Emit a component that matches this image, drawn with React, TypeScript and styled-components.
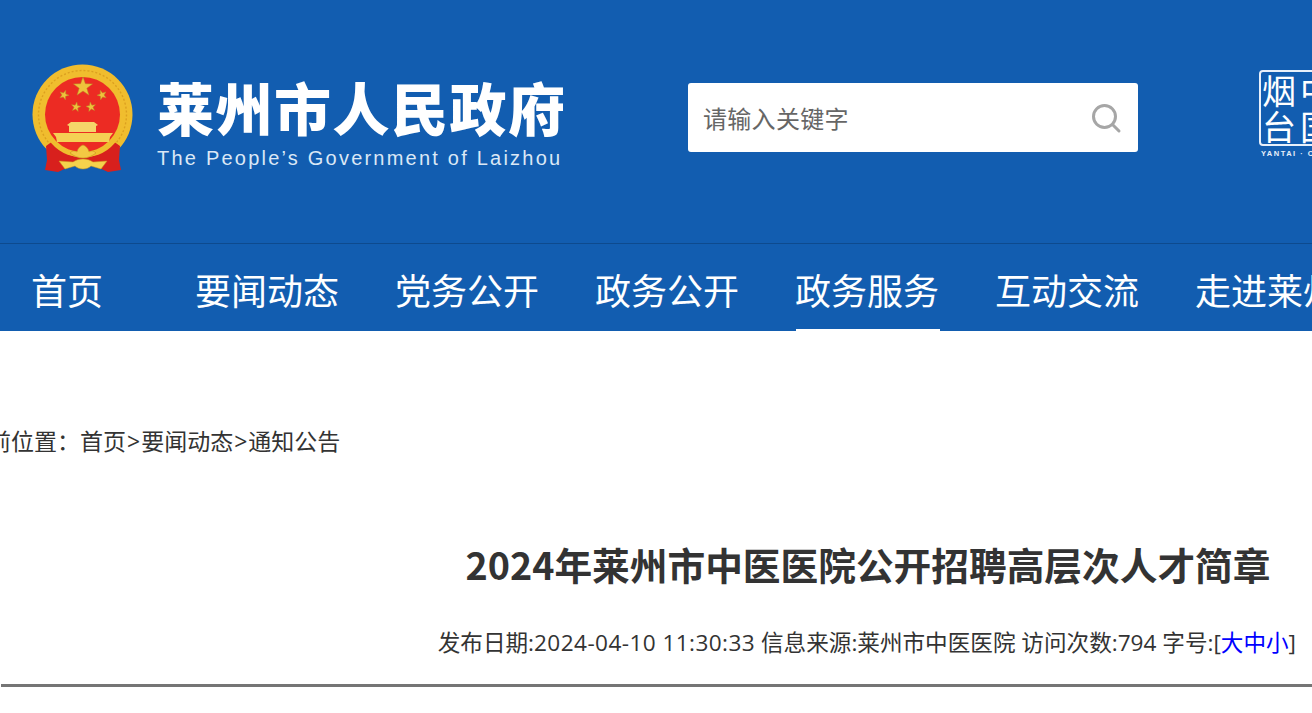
import React from "react";
import styled, { createGlobalStyle } from "styled-components";

const Global = createGlobalStyle`
  html, body { margin: 0; padding: 0; background: #fff; overflow: hidden; }
  body { font-family: "Noto Sans CJK SC", "Liberation Sans", sans-serif; }
  input::placeholder { color: #666; opacity: 1; }
`;

const Page = styled.div`
  width: 1312px;
  height: 713px;
  overflow: hidden;
`;

const Masthead = styled.header`
  height: 179px;
  background: #125db0;
  display: flex;
  align-items: flex-start;
  padding: 64px 0 0 32px;
  border-bottom: 1px solid #0d4a8e;
`;

const Emblem = styled.svg`
  width: 102px;
  height: 108px;
  flex: none;
`;

const Brand = styled.div`
  margin-left: 23px;
  width: 431px;
  flex: none;
`;

const BrandName = styled.div`
  font-size: 57px;
  font-weight: 900;
  line-height: 60px;
  margin-top: 12px;
  letter-spacing: 1.5px;
  color: #fff;
  white-space: nowrap;
`;

const BrandEnglish = styled.div`
  font-family: "Liberation Sans", Arial, sans-serif;
  font-size: 20px;
  line-height: 24px;
  margin-top: 10px;
  letter-spacing: 2.22px;
  color: #dbe8f6;
  white-space: nowrap;
`;

const Search = styled.form`
  width: 450px;
  height: 69px;
  margin: 19px 0 0 100px;
  background: #fff;
  border-radius: 3px;
  display: flex;
  align-items: center;
  flex: none;
`;

const SearchInput = styled.input`
  flex: 1;
  min-width: 0;
  border: 0;
  outline: 0;
  background: none;
  padding: 0 0 0 15px;
  font: 24px "Noto Sans CJK SC", sans-serif;
  letter-spacing: 0.3px;
`;

const SearchIcon = styled.svg`
  width: 32px;
  height: 32px;
  margin-right: 16px;
  flex: none;
`;

const Seal = styled.div`
  margin: 6px 0 0 121px;
  flex: none;
  width: 84px;
  color: #fff;
`;

const SealBox = styled.div`
  width: 76px;
  height: 72px;
  border: 2px solid #e8f0fa;
  border-radius: 4px;
  display: grid;
  grid-template-columns: 36px 40px;
  grid-template-rows: 36px 36px;
  font-family: "Noto Sans CJK SC", sans-serif;
  font-size: 34px;
  font-weight: 400;
  line-height: 36px;
  text-align: center;
`;

const SealCaption = styled.div`
  font: bold 7.5px "Liberation Sans", sans-serif;
  letter-spacing: 1.5px;
  margin-top: 3px;
  padding-left: 2px;
  white-space: nowrap;
  color: #e8f0fa;
`;

const Nav = styled.nav`
  height: 87px;
  background: #125db0;
  display: flex;
  padding-left: 32px;
  white-space: nowrap;
  overflow: hidden;
`;

const NavItem = styled.a<{ $active?: boolean; $first?: boolean }>`
  flex: none;
  height: 87px;
  box-sizing: border-box;
  font-size: 36px;
  line-height: 90px;
  text-indent: -1px;
  padding-right: 1px;
  color: #fff;
  margin-right: ${(p) => (p.$first ? "92px" : "56px")};
  border-bottom: 2px solid ${(p) => (p.$active ? "#fff" : "transparent")};
`;

const Crumbs = styled.div`
  margin: 93px 0 0 -35px;
  font-family: "Open Sans", "Noto Sans CJK SC", sans-serif;
  font-size: 23px;
  line-height: 34px;
  color: #333;
  white-space: nowrap;
`;

const CrumbSep = styled.span`
  padding: 0 1px;
`;

const Title = styled.h1`
  margin: 78px 0 0;
  width: 1736px;
  text-align: center;
  font-size: 37.7px;
  line-height: 56px;
  font-weight: 700;
  color: #333;
  white-space: nowrap;
`;

const Meta = styled.div`
  margin-top: 34px;
  padding-right: 16px;
  text-align: right;
  font-family: "Open Sans", "Noto Sans CJK SC", sans-serif;
  font-size: 22.6px;
  line-height: 34px;
  color: #333;
  white-space: nowrap;
`;

const MetaDate = styled.span`
  letter-spacing: 0.42px;
`;

const SizeLink = styled.a`
  color: #00f;
`;

const Rule = styled.hr`
  margin: 24px 0 0 1px;
  height: 3px;
  border: 0;
  background: #757575;
`;

function Star({ x, y, r, rot = 0 }: { x: number; y: number; r: number; rot?: number }) {
  const pts: string[] = [];
  for (let i = 0; i < 10; i++) {
    const a = (-90 + rot + i * 36) * (Math.PI / 180);
    const rad = i % 2 === 0 ? r : r * 0.4;
    pts.push(`${(x + rad * Math.cos(a)).toFixed(2)},${(y + rad * Math.sin(a)).toFixed(2)}`);
  }
  return <polygon points={pts.join(" ")} fill="#efc23c" stroke="#b98f24" strokeWidth="0.5" />;
}

export default function App() {
  return (
    <Page>
      <Global />
      <Masthead>
        <Emblem viewBox="32 64 102 108">
          <circle cx="82.5" cy="114.5" r="50" fill="#f0bd2e" />
          <circle cx="82.5" cy="114.5" r="44" fill="none" stroke="#dca020" strokeWidth="1.4" strokeDasharray="2 2" />
          <circle cx="82.5" cy="114.5" r="37.5" fill="#ec2b23" />
          <Star x={83} y={87} r={10} />
          <Star x={64} y={95} r={5} rot={20} />
          <Star x={102} y={95} r={5} rot={-20} />
          <Star x={76} y={107} r={5} rot={10} />
          <Star x={91} y={107} r={5} rot={-10} />
          <path d="M71 122h23l4 3-2 1v6H69v-6l-2-1z" fill="#f5d569" />
          <path d="M53 133h60l-3 4-1 5H57l-1-5z" fill="#f5d054" />
          <path d="M46 146l7-5q10 15 30 17q20-2 30-17l7 5-1 14 2 10-13 2-13-6H71l-13 6-13-2 2-10z" fill="#d8201d" />
          <path d="M50 138q12 17 33 17q21 0 33-17" fill="none" stroke="#f0bd2e" strokeWidth="4.5" />
          <path d="M70 153c3-3 5-2 7-1 1-4 3-6 6-7 3 1 5 3 6 7 2-1 4-2 7 1-4 3-8 5-13 5s-9-2-13-5z" fill="#f3c843" stroke="#c9961f" strokeWidth="0.6" />
          <path d="M59 161l14 1c3-2 6-3 10-3s7 1 10 3l14-1-6 8-10-3c-2 2-5 3-8 3s-6-1-8-3l-10 3z" fill="#f5d24c" stroke="#c9961f" strokeWidth="0.5" />
        </Emblem>
        <Brand>
          <BrandName>莱州市人民政府</BrandName>
          <BrandEnglish>The People’s Government of Laizhou</BrandEnglish>
        </Brand>
        <Search>
          <SearchInput placeholder="请输入关键字" />
          <SearchIcon viewBox="0 0 32 32" fill="none" stroke="#a6a6a6" strokeWidth="3" strokeLinecap="round">
            <circle cx="14.5" cy="14.5" r="11" />
            <path d="M22.5 22.5L29 29" />
          </SearchIcon>
        </Search>
        <Seal>
          <SealBox>
            <span>烟</span>
            <span>中</span>
            <span>台</span>
            <span>国</span>
          </SealBox>
          <SealCaption>YANTAI · CHINA</SealCaption>
        </Seal>
      </Masthead>
      <Nav>
        <NavItem $first>首页</NavItem>
        <NavItem>要闻动态</NavItem>
        <NavItem>党务公开</NavItem>
        <NavItem>政务公开</NavItem>
        <NavItem $active>政务服务</NavItem>
        <NavItem>互动交流</NavItem>
        <NavItem>走进莱州</NavItem>
      </Nav>
      <Crumbs>
        当前位置：首页<CrumbSep>&gt;</CrumbSep>要闻动态<CrumbSep>&gt;</CrumbSep>通知公告
      </Crumbs>
      <Title>2024年莱州市中医医院公开招聘高层次人才简章</Title>
      <Meta>
        发布日期:<MetaDate>2024-04-10 11:30:33</MetaDate> 信息来源:莱州市中医医院 访问次数:794 字号:[<SizeLink>大</SizeLink>
        <SizeLink>中</SizeLink>
        <SizeLink>小</SizeLink>]
      </Meta>
      <Rule />
    </Page>
  );
}
